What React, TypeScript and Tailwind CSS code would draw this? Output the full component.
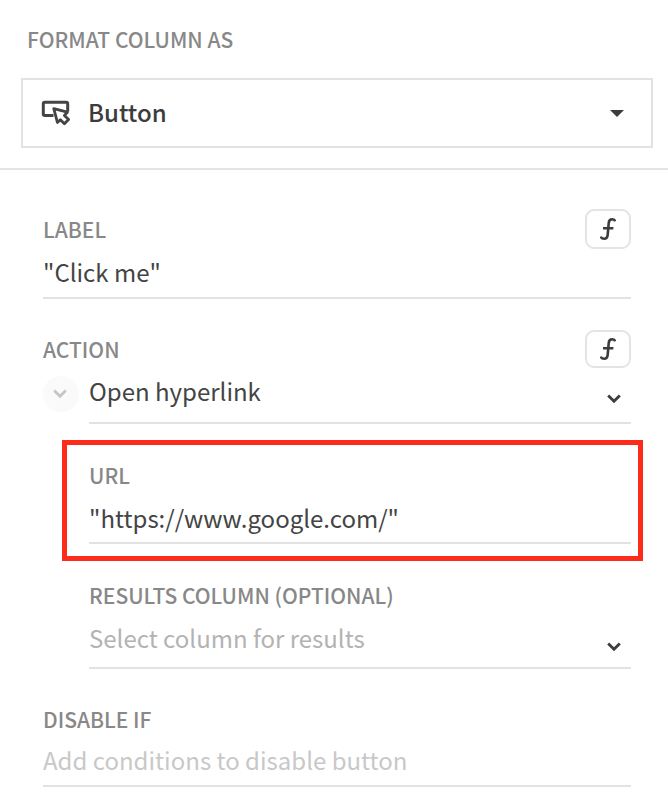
import type { ReactNode } from "react";

const labelClass = "text-[21px] leading-8 font-medium text-[#888]";
const controlClass =
  "block w-full appearance-none rounded-none border-b-2 border-[#e2e2e2] bg-transparent p-0 text-2xl leading-8 outline-none";

function Chevron({ className }: { className: string }) {
  return (
    <svg viewBox="0 0 14 10" className={className} fill="none" stroke="currentColor" strokeWidth="2.8" aria-hidden="true">
      <path d="M1.2 1.4 7 7.2 12.8 1.4" />
    </svg>
  );
}

function FormulaButton({ label }: { label: string }) {
  return (
    <button
      type="button"
      aria-label={label}
      className="flex h-full w-[46px] items-center justify-center rounded-[9px] border-2 border-[#e4e4e4] text-[#3c3c3c]"
    >
      <svg viewBox="0 0 16 22" className="h-[22px] w-4" fill="none" stroke="currentColor" strokeWidth="2.6" aria-hidden="true">
        <path d="M15.2 3.4C14.6 1.7 13.4 1.3 12.2 1.3 9.9 1.3 8.9 2.7 8.7 5.2L7.7 16.6C7.5 19.3 6.4 20.7 4.2 20.7 2.6 20.7 1.3 20.2.7 18.6M3 10.2H13.4" />
      </svg>
    </button>
  );
}

interface SelectBoxProps {
  id: string;
  className: string;
  chevronClass: string;
  children: ReactNode;
}

function SelectBox({ id, className, chevronClass, children }: SelectBoxProps) {
  return (
    <div className="grid w-full items-center">
      <select id={id} className={`${controlClass} col-start-1 row-start-1 ${className}`}>
        {children}
      </select>
      <Chevron
        className={`pointer-events-none col-start-1 row-start-1 mr-[10px] h-[10px] w-[14px] justify-self-end text-[#3c3c3c] ${chevronClass}`}
      />
    </div>
  );
}

export default function App() {
  return (
    <main className="w-full bg-white pb-[15px] font-['Noto_Sans_CJK_SC','Noto_Sans',sans-serif]">
      <section className="border-b-2 border-[#e4e4e4] pt-[23px] pr-[15px] pb-5 pl-[21px]">
        <label htmlFor="format" className={`${labelClass} block pl-1.5`}>
          FORMAT COLUMN AS
        </label>
        <div className="mt-[23px] grid items-center">
          <select
            id="format"
            className="col-start-1 row-start-1 h-[70px] w-full appearance-none border-2 border-[#e2e2e2] bg-transparent pb-0.5 pl-[65px] text-2xl leading-8 font-medium text-[#3c3c3c]"
          >
            <option>Button</option>
          </select>
          <svg
            viewBox="0 0 30 26"
            className="pointer-events-none col-start-1 row-start-1 ml-5 h-[26px] w-[30px]"
            fill="none"
            stroke="#444"
            strokeWidth="3"
            strokeLinejoin="round"
            aria-hidden="true"
          >
            <path d="M12.5 15.4H3.8Q2.3 15.4 2.3 13.9V3.8Q2.3 2.3 3.8 2.3H25.2Q26.7 2.3 26.7 3.8V11.5" />
            <path d="M12.8 8.6 26.4 12.2 23.4 15.4 27.6 19.6 23.4 23.8 19.4 19.8 16.4 22.4Z" strokeWidth="2.8" />
          </svg>
          <svg
            viewBox="0 0 14 7"
            className="pointer-events-none col-start-1 row-start-1 mr-[29px] h-[7px] w-[14px] justify-self-end"
            fill="#3c3c3c"
            aria-hidden="true"
          >
            <path d="M0 0H14L7 7Z" />
          </svg>
        </div>
      </section>

      <form className="pt-[39px] pr-[37px] pl-[43px]">
        <div className="flex h-10 items-center justify-between">
          <label htmlFor="label" className={labelClass}>LABEL</label>
          <FormulaButton label="Label formula" />
        </div>
        <input id="label" defaultValue={'"Click me"'} className={`${controlClass} h-[50px] pb-1 text-[#444]`} />

        <div className="mt-[31px] flex h-[38px] items-center justify-between">
          <label htmlFor="action" className={labelClass}>ACTION</label>
          <FormulaButton label="Action formula" />
        </div>
        <div className="flex items-start gap-2.5">
          <button
            type="button"
            aria-label="Collapse action"
            className="mt-2 flex size-9 shrink-0 items-center justify-center rounded-full bg-[#fafafa] pr-0.5 text-[#c6c6c6]"
          >
            <Chevron className="h-[10px] w-[14px]" />
          </button>
          <SelectBox id="action" className="h-14 pb-2 text-[#444]" chevronClass="mt-1.5">
            <option>Open hyperlink</option>
          </SelectBox>
        </div>

        <div className="pl-[46px]">
          <div className="mt-4 -mr-3 -ml-[27px] border-5 border-[#fc2b1c] pt-3.5 pr-[7px] pb-3 pl-[22px]">
            <label htmlFor="url" className={`${labelClass} block`}>URL</label>
            <input
              id="url"
              defaultValue={'"https://www.google.com/"'}
              className={`${controlClass} h-[53px] pt-0.5 text-[#444]`}
            />
          </div>

          <label htmlFor="results" className={`${labelClass} mt-[18px] block`}>
            RESULTS COLUMN (OPTIONAL)
          </label>
          <SelectBox id="results" className="h-[58px] pb-0.5 text-[#b3b3b3]" chevronClass="mt-3.5">
            <option>Select column for results</option>
          </SelectBox>
        </div>

        <label htmlFor="disable" className={`${labelClass} mt-[34px] block`}>DISABLE IF</label>
        <input
          id="disable"
          placeholder="Add conditions to disable button"
          className={`${controlClass} h-[52px] pb-0.5 text-[#444] placeholder:text-[#c8c8c8]`}
        />
      </form>
    </main>
  );
}
